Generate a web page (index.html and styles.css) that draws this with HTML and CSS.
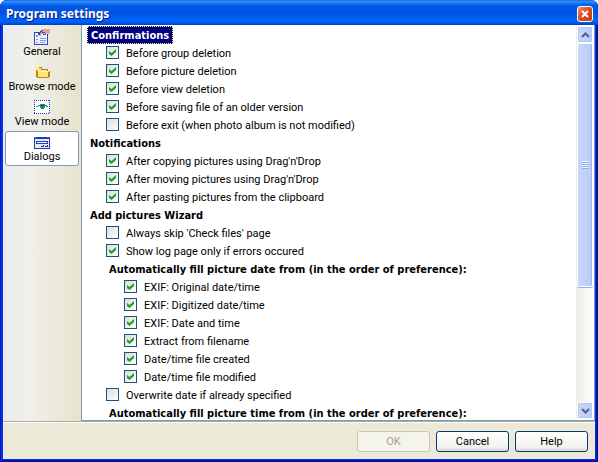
FILE: index.html
```html
<!DOCTYPE html>
<html lang="en">
<head>
<meta charset="utf-8">
<title>Program settings</title>
<link rel="stylesheet" href="styles.css">
</head>
<body>
<div class="window">
  <header class="titlebar">
    <h1>Program settings</h1>
    <button class="close" aria-label="Close"><svg width="8" height="8" viewBox="0 0 8 8"><path d="M1 1l6 6M7 1L1 7" stroke="#fff" stroke-width="2"/></svg></button>
  </header>
  <main class="content">
    <nav class="sidebar">
      <button class="tab"><svg width="16" height="16" viewBox="0 0 16 16" shape-rendering="crispEdges"><path d="M0 3h14v13H0z" fill="#2a4ad0"/><path d="M1 4h12v11H1z" fill="#eef2ff"/><path d="M2 6h2v2H2zM2 10h2v1H2zM2 13h2v1H2zM6 9h6v1H6zM6 11h6v1H6zM6 13h5v1H6z" fill="#8098e8"/><path d="M5 3h2V1h6v4h-2v1H9V5H7v2H5z" fill="#d0a0a8"/><path d="M4 4h1V3h1V2h1V1h2v1H8v1H7v1H6v2H4zM9 5h3v1H9zM8 3h3v1H8z" fill="#3c50a0"/><path d="M9 0h7v5h-3V3H9z" fill="#f4a090"/></svg><span>General</span></button>
      <button class="tab"><svg width="16" height="16" viewBox="0 0 16 16" shape-rendering="crispEdges"><path d="M2 3h6v2h6v2h2v6h-1v1H3v-1H2z" fill="#b88410"/><path d="M3 4h4v2h6v1H3z" fill="#ffe080"/><path d="M4 7h11v1H4z" fill="#fff4c0"/><path d="M4 8h10v5H4z" fill="#ffe478"/><path d="M0 3h5v1H0zM2 1h1v5H2z" fill="#fff08c"/></svg><span>Browse mode</span></button>
      <button class="tab"><svg width="16" height="16" viewBox="0 0 16 16" shape-rendering="crispEdges"><path d="M0 1h16v14H0z" fill="#fff"/><path d="M0 1.500h16M0 14.500h16M.5 1v14M15.500 1v14" stroke="#1030d0" stroke-dasharray="1 1"/><path d="M2 7h2V6h2V5h5v1h2v1h1v1h-2V7h-2V6H6v1H4v1H2z" fill="#3878b8"/><path d="M6 6h5v3h-1v1H7V9H6z" fill="#10a040"/><path d="M7 6h3v1H7z" fill="#103060"/></svg><span>View mode</span></button>
      <button class="tab selected"><svg width="16" height="16" viewBox="0 0 16 16" shape-rendering="crispEdges"><path d="M0 3h16v12H0z" fill="#1838d0"/><path d="M1 5h14v9H1z" fill="#eceada"/><path d="M1 3h1v1H1z" fill="#f0a030"/><path d="M13 3h2v1h-2z" fill="#e03020"/><path d="M2 7h12v3H2z" fill="#1838d0"/><path d="M3 8h10v1H3z" fill="#fff"/><path d="M7 11h3v2H7zM11 11h3v2h-3z" fill="#1838d0"/><path d="M7 11h2v1H7zM11 11h2v1h-2z" fill="#c8d0f0"/></svg><span>Dialogs</span></button>
    </nav>
    <section class="list">
      <div class="options">
        <h2><span class="focus">Confirmations</span></h2>
        <label><input type="checkbox" checked>Before group deletion</label>
        <label><input type="checkbox" checked>Before picture deletion</label>
        <label><input type="checkbox" checked>Before view deletion</label>
        <label><input type="checkbox" checked>Before saving file of an older version</label>
        <label><input type="checkbox">Before exit (when photo album is not modified)</label>
        <h2>Notifications</h2>
        <label><input type="checkbox" checked>After copying pictures using Drag'n'Drop</label>
        <label><input type="checkbox" checked>After moving pictures using Drag'n'Drop</label>
        <label><input type="checkbox" checked>After pasting pictures from the clipboard</label>
        <h2>Add pictures Wizard</h2>
        <label><input type="checkbox">Always skip 'Check files' page</label>
        <label><input type="checkbox" checked>Show log page only if errors occured</label>
        <div class="nested">
          <h3>Automatically fill picture date from (in the order of preference):</h3>
          <label><input type="checkbox" checked>EXIF: Original date/time</label>
          <label><input type="checkbox" checked>EXIF: Digitized date/time</label>
          <label><input type="checkbox" checked>EXIF: Date and time</label>
          <label><input type="checkbox" checked>Extract from filename</label>
          <label><input type="checkbox" checked>Date/time file created</label>
          <label><input type="checkbox" checked>Date/time file modified</label>
        </div>
        <label><input type="checkbox">Overwrite date if already specified</label>
        <div class="nested">
          <h3>Automatically fill picture time from (in the order of preference):</h3>
        </div>
      </div>
      <div class="scrollbar">
        <button class="arrow" aria-label="Scroll up"><svg width="9" height="6" viewBox="0 0 9 6"><path d="M1 5l3.500-3.500L8 5" fill="none" stroke="#4d6185" stroke-width="2"/></svg></button>
        <div class="track"><div class="thumb"><span class="grip"></span></div></div>
        <button class="arrow" aria-label="Scroll down"><svg width="9" height="6" viewBox="0 0 9 6"><path d="M1 1l3.500 3.500L8 1" fill="none" stroke="#4d6185" stroke-width="2"/></svg></button>
      </div>
    </section>
  </main>
  <footer class="actions">
    <button class="push" disabled>OK</button>
    <button class="push">Cancel</button>
    <button class="push">Help</button>
  </footer>
</div>
</body>
</html>
```
FILE: styles.css
```css
* { box-sizing: border-box; }
body {
  margin: 0;
  background: #fff;
  color: #000;
  font: 11px/14px Roboto, Tahoma, sans-serif;
}
button { font: inherit; color: inherit; padding: 0; }
h1, h2, h3 { margin: 0; font-size: inherit; }
svg { display: block; flex: none; }

.window {
  display: flex;
  flex-direction: column;
  height: 100vh;
  padding: 0 3px 3px;
  border-radius: 7px 7px 0 0;
  background: #0831d9;
  box-shadow: inset 1px 0 #0019cf, inset -1px -1px #00138c, inset -2px -2px #0018c0;
  overflow: hidden;
}
.titlebar {
  flex: none;
  display: flex;
  align-items: center;
  justify-content: space-between;
  height: 25px;
  margin: 0 -3px;
  padding: 2px 5px 0 6px;
  background: linear-gradient(#0a50d8 0, #3a92ff 1px, #1a78f4 3px, #0058e6 6px, #0054e3 13px, #0062fa 19px, #0060f6 22px, #0040c0 25px);
}
.titlebar h1 {
  color: #fff;
  font-family: "Noto Sans", "Trebuchet MS", sans-serif;
  font-size: 12px;
  line-height: 20px;
  text-shadow: 1px 1px #0a1883;
}
.close {
  display: grid;
  place-items: center;
  width: 16px;
  height: 16px;
  border: 1px solid #fff;
  border-radius: 3px;
  background: linear-gradient(135deg, #f0957c, #e0502c 40%, #c83808);
}

.content {
  flex: 1;
  min-height: 0;
  display: grid;
  grid-template-columns: 78px 1fr;
  border-bottom: 1px solid #aca899;
}
.sidebar {
  padding: 1px 2px;
  background: linear-gradient(90deg, #e9ecef, #f1f0ea 35%, #e6e3cb);
}
.tab {
  display: flex;
  flex-direction: column;
  align-items: center;
  width: 100%;
  height: 35px;
  padding-top: 2px;
  border: 1px solid transparent;
  border-radius: 3px;
  background: none;
  white-space: nowrap;
}
.selected { background: #fff; border-color: #7f9db9; }

.list {
  min-height: 0;
  display: flex;
  padding: 1px;
  border: 1px solid #7f9db9;
  border-top: 0;
  background: #fff;
}
.options {
  flex: 1;
  min-width: 0;
  padding-left: 5px;
  line-height: 20px;
  white-space: nowrap;
  overflow: hidden;
}
.options h2, .options h3 {
  height: 18px;
  font-family: "DejaVu Sans Condensed", Tahoma, sans-serif;
}
.options h2 { padding-left: 2px; }
.options h3 { padding-left: 3px; }
.focus {
  display: inline-block;
  margin-left: -3px;
  padding: 2px 3px 0;
  line-height: 14px;
  color: #fff;
  background: #00007b;
  border: 1px dotted #ffff84;
  vertical-align: top;
}
.options label {
  display: flex;
  align-items: flex-start;
  gap: 7px;
  height: 18px;
  padding-left: 18px;
}
.nested { padding-left: 18px; }
.options input {
  appearance: none;
  display: grid;
  place-items: center;
  width: 13px;
  height: 13px;
  margin: 2px 0 0;
  border: 1px solid #1c5180;
  background: linear-gradient(135deg, #dcdcd7, #fff);
}
.options input:checked::before {
  content: "";
  width: 7px;
  height: 7px;
  background: #21a121;
  clip-path: polygon(0 29%, 36% 57%, 100% 0, 100% 43%, 36% 100%, 0 71%);
}

.scrollbar {
  display: flex;
  flex-direction: column;
  width: 17px;
  background: linear-gradient(90deg, #eeede5, #fdfdfa);
}
.arrow, .thumb {
  display: grid;
  place-items: center;
  border: 1px solid #fff;
  border-radius: 2px;
  background: linear-gradient(90deg, #c8d6fb, #b9cbf8);
  box-shadow: inset 0 0 0 1px #b4c8f6;
}
.arrow { width: 16px; height: 17px; margin-left: 1px; }
.track { flex: 1; padding-left: 1px; }
.thumb {
  width: 16px;
  height: 68%;
  box-shadow: inset -1px 0 #a0b5e8, 0 1px #98b0e4;
}
.grip {
  width: 7px;
  height: 8px;
  background: repeating-linear-gradient(#eef4fe 0 1px, #8cb0f8 1px 2px);
}

.actions {
  flex: none;
  display: flex;
  justify-content: flex-end;
  gap: 6px;
  padding: 8px 7px 7px;
  border-top: 1px solid #fff;
  background: #ece9d8;
}
.push {
  width: 73px;
  height: 21px;
  border: 1px solid #003c74;
  border-radius: 3px;
  background: linear-gradient(#fff, #f3f2ec 80%, #dcd6cb);
}
.push:disabled {
  color: #a1a192;
  border-color: #c9c7ba;
  background: #f5f4ea;
}
```
